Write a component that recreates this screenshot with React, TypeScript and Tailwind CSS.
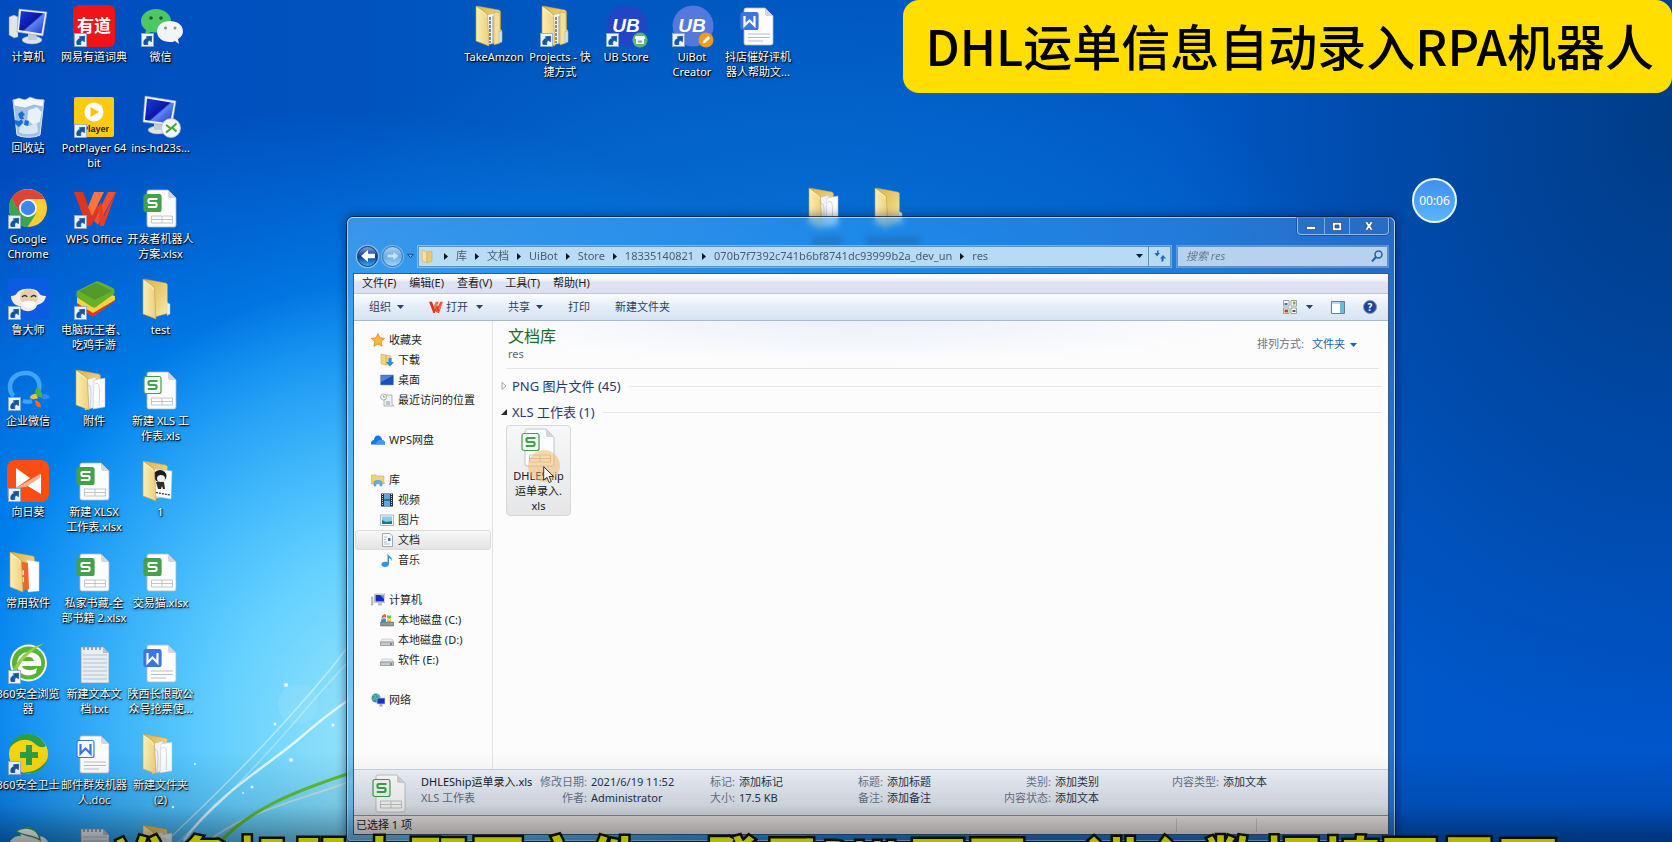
import React from "react";

type Kids = { children?: React.ReactNode };

/* ---------- desktop icons (40 x 42 artboard) ---------- */

function Art({ children, shortcut }: Kids & { shortcut?: boolean }) {
  return (
    <svg viewBox="0 0 40 42" className="h-[42px] w-10 shrink-0 overflow-visible" aria-hidden="true">
      {children}
      {shortcut && (
        <g>
          <rect x="0.5" y="28.5" width="12" height="13" fill="#e9f3fb" stroke="#8fa9c4" strokeWidth="0.8" />
          <path d="M3 39.500c-.8-3.400.6-5.800 3.600-6l-1.300-1.700 5.400-.5-.4 5.500-1.500-1.500c-2 .5-2.600 2-1.900 4.200z" fill="#17539f" stroke="#17539f" strokeWidth="0.8" />
        </g>
      )}
    </svg>
  );
}

function DocIcon({ letter, outlined }: { letter: "S" | "W"; outlined?: boolean }) {
  const tone = letter === "S" ? "#43a04b" : "#3d74e0";
  return (
    <Art>
      <path d="M8 3h19l8 8v27a2 2 0 0 1-2 2H8a2 2 0 0 1-2-2V5a2 2 0 0 1 2-2z" fill="#fdfdfd" stroke="#b0b7bf" strokeWidth="0.8" />
      <path d="M27 3v6a2 2 0 0 0 2 2h6z" fill="#d0d6dc" />
      {letter === "S" ? (
        <path d="M10.500 29h21v7h-21zM10.500 32.500h21M21 29v7" fill="none" stroke="#b4b8bd" strokeWidth="0.8" />
      ) : (
        <path d="M10 29h22M10 32.500h22M10 36h15" fill="none" stroke="#b4b8bd" strokeWidth="0.9" />
      )}
      <rect x="3" y="7.500" width="17" height="17" rx="2" fill={outlined ? "#f4fbf6" : tone} stroke={tone} strokeWidth="1.200" />
      {letter === "S" ? (
        <path d="M16.500 12H8.800a1.300 1.300 0 0 0-1.300 1.300v1.400A1.300 1.300 0 0 0 8.800 16h5.400a1.300 1.300 0 0 1 1.300 1.300v1.400a1.300 1.300 0 0 1-1.300 1.300H6.800" fill="none" stroke={outlined ? tone : "#fff"} strokeWidth="2.200" />
      ) : (
        <path d="M6.500 11v9.500l5-5 5 5V11" fill="none" stroke={outlined ? tone : "#fff"} strokeWidth="2.200" />
      )}
    </Art>
  );
}

function FolderIcon({ fill = "empty", shortcut }: { fill?: "empty" | "papers" | "docs" | "orange" | "photo"; shortcut?: boolean }) {
  return (
    <Art shortcut={shortcut}>
      <defs>
        <linearGradient id="folder-back" x1="0" y1="0" x2="1" y2="1">
          <stop offset="0" stopColor="#d9b450" />
          <stop offset="0.55" stopColor="#edcf78" />
          <stop offset="1" stopColor="#fbeeb8" />
        </linearGradient>
        <linearGradient id="folder-front" x1="0" y1="0" x2="1" y2="0">
          <stop offset="0" stopColor="#fbeeb6" />
          <stop offset="1" stopColor="#edd07c" />
        </linearGradient>
      </defs>
      <path d="M3 1l22 4 1.500 1.500V24l1.500 2v9L14 39z" fill="url(#folder-back)" stroke="#b8963c" strokeWidth="0.5" />
      {fill === "empty" && <path d="M26 25l3 1v10l-3 1.500z" fill="#e6eef2" stroke="#b4bfc4" strokeWidth="0.4" />}
      {fill === "papers" && (
        <g stroke="#b9bec6" strokeWidth="0.5">
          <path d="M11 11l11-3v30l-11 3z" fill="#f1f3f6" />
          <path d="M20 11l11-2v29l-12 2z" fill="#fcfdfe" />
          <path d="M13 17c4-3 5 4 3 22M21 15c5-3 5 5 4 22" fill="none" stroke="#a9b0ba" />
        </g>
      )}
      {fill === "docs" && (
        <g strokeWidth="0.5">
          <path d="M12 10l9-2v30l-9 2z" fill="#f3f3ee" stroke="#a9a58f" />
          <path d="M16 12v26" stroke="#5f6a6a" strokeWidth="1.500" strokeDasharray="3 1" />
          <path d="M19 11v27" stroke="#8d9694" strokeWidth="1" />
          <path d="M20 7l6 1v30l-6 2z" fill="#f6df95" stroke="#b99a48" />
          <path d="M25 26l3 1v10l-3 1z" fill="#cfe3ef" stroke="#8fb0c4" />
        </g>
      )}
      {fill === "orange" && (
        <g>
          <path d="M19 9l12 2v29l-11 1z" fill="#fff" stroke="#c8ccd2" strokeWidth="0.5" />
          <path d="M11 10l9 2 1 26-10 3z" fill="#f0652a" />
          <path d="M12 20l4-1v5l-4 1zM12 27l4-1v5l-4 1z" fill="#ffd9c2" />
        </g>
      )}
      {fill === "photo" && (
        <g>
          <path d="M12 9l19 2-1 28-18-3z" fill="#fafafa" stroke="#c5c8cc" strokeWidth="0.5" />
          <ellipse cx="19" cy="16" rx="6.500" ry="6" fill="#1d1d1f" />
          <ellipse cx="20" cy="18.500" rx="4" ry="3.500" fill="#f5efe9" />
          <path d="M15 22h8l1 7h-2l-1-3-1 3h-3z" fill="#2d2d30" />
          <path d="M12 32l17 3" stroke="#333" strokeWidth="1.200" strokeDasharray="2 1" />
        </g>
      )}
      <path d="M2 1l10 7c1 .8 1.500 2 1.500 3.500L15 41 2 36z" fill="url(#folder-front)" stroke="#c09f48" strokeWidth="0.6" />
      <path d="M3 3l8 6c1 .7 1 2 1 3" fill="none" stroke="#fff6cf" strokeWidth="0.8" />
    </Art>
  );
}

function PcIcon({ remote }: { remote?: boolean }) {
  return (
    <Art>
      <defs>
        <linearGradient id="pc-screen" x1="0" y1="0" x2="1" y2="1">
          <stop offset="0" stopColor="#1d3fd0" />
          <stop offset="0.5" stopColor="#0a16a8" />
          <stop offset="0.55" stopColor="#5b86f0" />
          <stop offset="1" stopColor="#1b35c4" />
        </linearGradient>
      </defs>
      {!remote && <path d="M1 12l5-2 4 2v20l-4 1-5-3z" fill="#dfe5ea" stroke="#7f8b96" strokeWidth="0.5" />}
      <g transform={remote ? "translate(-7 -1)" : undefined}>
        <ellipse cx="24" cy="35" rx="10" ry="4" fill="#dde4ea" stroke="#92a0ac" strokeWidth="0.5" />
        <path d="M20 27h8l1 8h-9z" fill="#c3ccd4" />
        <path d={remote ? "M11 1l31 5-4 25-29-4z" : "M11 4l28 3-4 24-26-4z"} fill="#eef2f5" stroke="#90a0b0" strokeWidth="0.6" />
        <path d={remote ? "M13 3.500l27 4.500-4 20.500L11 25z" : "M13 6l24 2.500-3.500 20L11 25z"} fill="url(#pc-screen)" />
      </g>
      {remote && (
        <g>
          <circle cx="30" cy="32" r="9.500" fill="#f4f6f6" stroke="#b7bfc4" strokeWidth="0.8" />
          <path d="M25 29l5 3.500-5 4M35.500 27.500l-4.500 4 4.500 4" fill="none" stroke="#44a43c" strokeWidth="2" />
        </g>
      )}
    </Art>
  );
}

const YoudaoIcon = () => (
  <Art shortcut>
    <rect x="-1" y="0" width="42" height="42" rx="6" fill="#f01418" />
    <text x="20" y="27" textAnchor="middle" fontSize="17" fontWeight="700" fill="#fff" fontFamily="'Noto Sans CJK SC', sans-serif">有道</text>
  </Art>
);

const WechatIcon = () => (
  <Art shortcut>
    <path d="M15 4C7 4 0 9 0 16c0 4 2 7 5 9l-1 5 6-3c9 2 20-2 20-11C30 9 23 4 15 4z" fill="#4cc764" />
    <circle cx="10" cy="13" r="1.800" fill="#1f5d2c" /><circle cx="20" cy="13" r="1.800" fill="#1f5d2c" />
    <path d="M29 16c-7 0-13 4-13 10.500S22 37 29 37c2 0 3 0 5-1l4 3-1-5c3-2 5-4 5-7.500C42 20 36 16 29 16z" fill="#f3f5f5" />
    <circle cx="24.500" cy="23" r="1.500" fill="#8a8f92" /><circle cx="34" cy="23" r="1.500" fill="#8a8f92" />
  </Art>
);

const BinIcon = () => (
  <Art>
    <path d="M5 4h31l-4 35c-6 3-17 3-23 0z" fill="#bcd6ea" fillOpacity="0.85" stroke="#dcebf6" strokeWidth="1" />
    <path d="M5 4l6-2 6 2 5-3 6 2 8 1-1 7-9-2-9 3-11-2z" fill="#f2f7fb" stroke="#8ea5b8" strokeWidth="0.6" />
    <path d="M20 14l9-3 5 5-2 10-7 3-6-5z" fill="#e9f1f7" stroke="#9fb6c8" strokeWidth="0.4" />
    <path d="M11 36l1-9 9 3 8-3 1 9c-6 3-14 3-19 0z" fill="#e6eff6" opacity="0.8" />
    <path d="M10 18l4-3 3 4-2 1 1 3h-4zM7 24l4 1 3-2 1 4-4 4-4-3zM17 24l4 1-1 5-4-1z" fill="#1c6fd0" />
  </Art>
);

const PotPlayerIcon = () => (
  <Art shortcut>
    <rect x="0" y="1" width="40" height="40" rx="2" fill="#fcca10" />
    <circle cx="20" cy="16" r="9.500" fill="#fff" />
    <path d="M16.500 11l8.500 5-8.500 5z" fill="#fcc010" />
    <text x="35" y="36" textAnchor="end" fontSize="9" fontWeight="700" fill="#2b2410" fontFamily="'Liberation Sans', sans-serif">Player</text>
  </Art>
);

const ChromeIcon = () => (
  <Art shortcut>
    <circle cx="20" cy="21" r="19" fill="#f8ce33" />
    <path d="M3.500 11.500A19 19 0 0 1 36.500 12H20L11.500 26z" fill="#dd4438" />
    <path d="M3.500 11.500A19 19 0 0 0 19.500 40l9-14-8.500 4-8-4z" fill="#3da251" />
    <circle cx="20" cy="21" r="9" fill="#f4f6f8" />
    <circle cx="20" cy="21" r="7.200" fill="#3f83ee" />
  </Art>
);

const WpsMark = () => (
  <g>
    <path d="M0 5h9l8 22 6-11 3 6-9 17h-4z" fill="#e0341d" />
    <path d="M42 5h-8L20 34l4 4z" fill="#f5502b" />
    <path d="M20 5h10l-12 24-4-9z" fill="#fb7340" />
    <path d="M24 20l3-5 3 14 12-24-12 34h-4z" fill="#ee3d1e" />
  </g>
);

const LuIcon = () => (
  <Art shortcut>
    <rect x="0" y="0" width="41" height="41" rx="3" fill="#0b5ce2" />
    <path d="M3 18c3 0 5-1 6-3 3-5 19-6 22 0 1 2 3 3 7 3-1 6-5 8-9 9-2 8-15 8-18 1-5-1-8-5-8-10z" fill="#f3ebe1" />
    <ellipse cx="21" cy="19" rx="9" ry="8" fill="#e3cfb4" />
    <path d="M14 19c2-2 4-2 5 0M23 19c2-2 4-2 5 0" stroke="#333" strokeWidth="1.500" fill="none" />
    <path d="M14 25c3-3 11-3 14 0-2 7-12 7-14 0z" fill="#fffaf3" />
  </Art>
);

const StacksIcon = () => (
  <Art shortcut>
    <path d="M3 23l20-7 18 7-22 16-16-10z" fill="#d8382c" />
    <path d="M3 19l20-7 18 6v4L19 35 3 25z" fill="#f6d53a" />
    <path d="M3 13L21 4c2-1 3-1 5 0l13 6c2 1 2 4 1 6L22 29c-1 1-3 1-4 0L4 20c-2-1-2-5-1-7z" fill="#67b02e" />
    <path d="M5 13l17-8 16 8-17 9z" fill="#529a2b" />
  </Art>
);

const WeComIcon = () => (
  <Art shortcut>
    <path d="M31 21c2-10-4-17-13-17C8 4 2 10 2 18c0 4 1 7 4 9" fill="none" stroke="#3fa6f5" strokeWidth="4.500" />
    <path d="M15 32c3 1 6 1 9 0" stroke="#3fa6f5" strokeWidth="4" fill="none" />
    <path d="M29 18c5 3 6 8 5 11-3-1-6-2-7-5 0-2 1-4 2-6z" fill="#4db04f" />
    <path d="M35 25c4 0 6 1 7 3-3 3-6 3-8 1z" fill="#2f8de8" />
    <path d="M27 31c4 1 6 4 6 7-3 1-6-1-6-7z" fill="#ee6a2c" />
    <path d="M28 25c-4 0-6 2-6 4 3 2 6 1 8 0z" fill="#f3c243" />
  </Art>
);

const SunloginIcon = () => (
  <Art shortcut>
    <rect x="-1" y="0" width="42" height="42" rx="8" fill="#fb4c12" />
    <path d="M8 8l14 10-14 10z M33 14v20L18 25z" fill="#fff" />
    <path d="M8 28l24-14v4L18 27z" fill="#ffb08d" />
  </Art>
);

const Browser360Icon = () => (
  <Art shortcut>
    <circle cx="20.500" cy="21" r="18.500" fill="#f3f9ee" />
    <circle cx="20.500" cy="21" r="16.500" fill="#58b234" />
    <path d="M33 24H14c1 4 9 6 15 2l-1 5c-9 6-20 0-19-10S19 8 26 11c6 2 8 7 7 13zM14 19h12c-1-5-10-6-12 0z" fill="#fff" />
    <path d="M4 31C10 14 24 4 37 1 24 8 12 18 7 33z" fill="#8fd14b" />
  </Art>
);

const Guard360Icon = () => (
  <Art shortcut>
    <circle cx="20.500" cy="21" r="19.500" fill="#f7d310" />
    <path d="M1 16C4 3 16-1 26 2c6 2 10 7 12 11-4 3-9 0-12-3-6-5-17-5-25 6z" fill="#2c9d45" />
    <path d="M40 25c-3 12-14 18-25 14 10 1 20-4 25-14z" fill="#2c9d45" />
    <path d="M18 12h6v7h6v6h-6v7h-6v-7h-6v-6h6z" fill="#2c9d45" />
  </Art>
);

const NotepadIcon = () => (
  <Art>
    <path d="M7 5h22l6 6v30H7z" fill="#e9eef4" stroke="#8d99a8" strokeWidth="0.7" />
    <path d="M9 13h24M9 17h24M9 21h24M9 25h24M9 29h24M9 33h24M9 37h24" stroke="#aebccc" strokeWidth="0.9" />
    <path d="M10 5v3M14 5v3M18 5v3M22 5v3M26 5v3" stroke="#7f8792" strokeWidth="1.400" />
    <path d="M29 5v6h6z" fill="#b6bfca" />
  </Art>
);

const FlowerIcon = () => (
  <Art shortcut>
    <circle cx="20" cy="11" r="8" fill="#f7faf8" stroke="#2f9a6b" strokeWidth="1" />
    <circle cx="11" cy="22" r="10" fill="#f7faf8" />
    <circle cx="31" cy="22" r="10" fill="#f7faf8" />
    <path d="M8 7c9-6 23-3 24 9-6-5-15-3-24-9z" fill="#fff" stroke="#2f9a6b" strokeWidth="1.500" />
  </Art>
);

function UbIcon({ creator }: { creator?: boolean }) {
  return (
    <Art shortcut>
      <circle cx="21" cy="21" r="20.500" fill={creator ? "#5479dc" : "#2046c6"} />
      <text x="20" y="27" textAnchor="middle" fontSize="19" fontWeight="700" fontStyle="italic" fill="#fff" fontFamily="'Liberation Sans', sans-serif">UB</text>
      <circle cx="34" cy="35" r="7.500" fill={creator ? "#f49a1c" : "#5cb777"} />
      {creator ? (
        <path d="M30.500 38.500l.6-2.500 5-5 2 2-5 5z" fill="#fff" />
      ) : (
        <path d="M29.500 31h9l.8 3h-1.300v5h-8v-5h-1.300zM32 35.500v2h4v-2z" fill="#fff" fillRule="evenodd" />
      )}
    </Art>
  );
}

/* ---------- desktop shortcuts ---------- */

type Shortcut = { icon: React.ReactNode; lines: string[] };

const desktop: Shortcut[] = [
  { icon: <PcIcon />, lines: ["计算机"] },
  { icon: <BinIcon />, lines: ["回收站"] },
  { icon: <ChromeIcon />, lines: ["Google", "Chrome"] },
  { icon: <LuIcon />, lines: ["鲁大师"] },
  { icon: <WeComIcon />, lines: ["企业微信"] },
  { icon: <SunloginIcon />, lines: ["向日葵"] },
  { icon: <FolderIcon fill="orange" />, lines: ["常用软件"] },
  { icon: <Browser360Icon />, lines: ["360安全浏览", "器"] },
  { icon: <Guard360Icon />, lines: ["360安全卫士"] },
  { icon: <FlowerIcon />, lines: [] },
  { icon: <YoudaoIcon />, lines: ["网易有道词典"] },
  { icon: <PotPlayerIcon />, lines: ["PotPlayer 64", "bit"] },
  { icon: <Art shortcut><WpsMark /></Art>, lines: ["WPS Office"] },
  { icon: <StacksIcon />, lines: ["电脑玩王者、", "吃鸡手游"] },
  { icon: <FolderIcon fill="papers" />, lines: ["附件"] },
  { icon: <DocIcon letter="S" />, lines: ["新建 XLSX", "工作表.xlsx"] },
  { icon: <DocIcon letter="S" />, lines: ["私家书藏-全", "部书籍 2.xlsx"] },
  { icon: <NotepadIcon />, lines: ["新建文本文", "档.txt"] },
  { icon: <DocIcon letter="W" outlined />, lines: ["邮件群发机器", "人.doc"] },
  { icon: <NotepadIcon />, lines: [] },
  { icon: <WechatIcon />, lines: ["微信"] },
  { icon: <PcIcon remote />, lines: ["ins-hd23s..."] },
  { icon: <DocIcon letter="S" />, lines: ["开发者机器人", "方案.xlsx"] },
  { icon: <FolderIcon />, lines: ["test"] },
  { icon: <DocIcon letter="S" outlined />, lines: ["新建 XLS 工", "作表.xls"] },
  { icon: <FolderIcon fill="photo" />, lines: ["1"] },
  { icon: <DocIcon letter="S" />, lines: ["交易猫.xlsx"] },
  { icon: <DocIcon letter="W" />, lines: ["陕西长恨歌公", "众号抢票使..."] },
  { icon: <FolderIcon fill="papers" />, lines: ["新建文件夹", "(2)"] },
  { icon: <FolderIcon fill="papers" />, lines: [] },
];

const topRow: Shortcut[] = [
  { icon: <FolderIcon fill="docs" />, lines: ["TakeAmzon"] },
  { icon: <FolderIcon fill="docs" shortcut />, lines: ["Projects - 快", "捷方式"] },
  { icon: <UbIcon />, lines: ["UB Store"] },
  { icon: <UbIcon creator />, lines: ["UiBot", "Creator"] },
  { icon: <DocIcon letter="W" />, lines: ["抖店催好评机", "器人帮助文..."] },
];

function DesktopItem({ icon, lines }: Shortcut) {
  return (
    <button type="button" className="flex h-[91px] flex-col items-center gap-[2px] pt-[5px] text-[11px] leading-[15px] text-white">
      {icon}
      <span className="flex flex-col items-center whitespace-nowrap [text-shadow:1px_1px_1px_#000,0_1px_3px_rgba(0,0,0,0.9)]">
        {lines.map((l) => (
          <span key={l}>{l}</span>
        ))}
      </span>
    </button>
  );
}

function Wallpaper() {
  return (
    <div className="absolute inset-0 bg-[radial-gradient(ellipse_26%_55%_at_24%_88%,#a4e8f8_0%,rgba(112,216,255,0.9)_40%,rgba(30,170,255,0)_100%),radial-gradient(ellipse_40%_62%_at_20%_75%,#0ca0ff_0%,rgba(0,142,250,0.8)_50%,rgba(0,110,225,0)_100%),radial-gradient(ellipse_36%_50%_at_48%_50%,rgba(16,140,232,0.9)_0%,rgba(8,120,220,0.6)_50%,rgba(0,96,210,0)_100%),radial-gradient(ellipse_30%_75%_at_100%_15%,#003c86_0%,rgba(0,66,150,0.7)_50%,rgba(0,80,190,0)_100%),linear-gradient(90deg,#004cbe_0%,#0058c0_35%,#0058c6_75%,#0056cc_100%)]">
      <svg viewBox="0 0 1672 842" preserveAspectRatio="xMinYMax slice" className="h-full w-full" aria-hidden="true">
        <g fill="none" strokeLinecap="round">
          <path d="M172 836Q240 772 290 716T352 640" stroke="#e4faff" strokeOpacity="0.55" strokeWidth="1.500" />
          <path d="M178 842Q240 786 300 716T356 658" stroke="#e4faff" strokeOpacity="0.4" strokeWidth="1.500" />
          <path d="M184 840C220 792 270 764 300 738S340 706 360 692" stroke="#f4fdff" strokeOpacity="0.85" strokeWidth="2.500" />
          <path d="M200 848C240 812 290 804 360 778" stroke="#e6e6d8" strokeOpacity="0.6" strokeWidth="2" />
          <path d="M220 842C250 810 290 792 360 770" stroke="#5fc035" strokeWidth="3" />
        </g>
        <g fill="#fff">
          <circle cx="286" cy="685" r="2" /><circle cx="291" cy="760" r="2" /><circle cx="275" cy="724" r="1.500" />
          <circle cx="333" cy="725" r="1.500" /><circle cx="252" cy="787" r="1.500" /><circle cx="173" cy="807" r="1.200" />
          <circle cx="195" cy="764" r="1" /><circle cx="243" cy="793" r="1" />
        </g>
        <circle cx="298" cy="704" r="20" fill="#fff" opacity="0.08" />
      </svg>
    </div>
  );
}

/* ---------- explorer window ---------- */

const Caret = ({ className = "" }: { className?: string }) => (
  <svg viewBox="0 0 7 4" className={`h-1 w-[7px] shrink-0 ${className}`} aria-hidden="true">
    <path d="M0 0h7L3.500 4z" fill="currentColor" />
  </svg>
);

const Glyph = ({ children }: Kids) => (
  <svg viewBox="0 0 14 14" className="h-[14px] w-[14px] shrink-0" aria-hidden="true">{children}</svg>
);

const glyphs = {
  star: <Glyph><path d="M7 .5l2 4.300 4.700.6-3.500 3.200.9 4.700L7 11l-4.100 2.300.9-4.700L.3 5.400 5 4.800z" fill="#fbb63a" stroke="#d9801c" strokeWidth="0.7" /></Glyph>,
  download: <Glyph><path d="M1 1l5 1v10l-5-1zM6 2l5 1v9H6z" fill="#f3d77c" stroke="#c9a44a" strokeWidth="0.5" /><path d="M8.500 5h3v4H14l-4 4.500L6 9h2.500z" fill="#2a8fdb" /></Glyph>,
  desktop: <Glyph><path d="M.5 2h13v10H.5z" fill="#1c50b8" stroke="#7c9cc8" strokeWidth="0.6" /><path d="M1 2.500h12L1 9z" fill="#4d83dc" /></Glyph>,
  recent: <Glyph><path d="M4 2h8v9l2 2H4z" fill="#eef0f2" stroke="#949ba3" strokeWidth="0.7" /><circle cx="3.500" cy="4" r="3" fill="#f6f7f8" stroke="#8b949e" strokeWidth="0.7" /><path d="M3.500 2.500V4H5M6 9h4M6 11h4" stroke="#6d7680" strokeWidth="0.7" fill="none" /></Glyph>,
  cloud: <Glyph><path d="M0 11.500C-.5 8 2 7 3 7c0-3 2-5 4.500-4.500S11 5 11 7c2 0 3.500 2 3 4.500z" fill="#1d74e6" /><path d="M5 11.500c0-3 3-5 5-4.500 3 0 4 2 4 4.500z" fill="#3f9bf7" /></Glyph>,
  library: <Glyph><path d="M.5 2H5l1 1h7v8H.500z" fill="#f0d27a" stroke="#c4a24c" strokeWidth="0.5" /><path d="M3 13V9c0-2 8-2 8 0v4H9v-2c0-1-4-1-4 0v2z" fill="#5fb5e4" stroke="#2b80b8" strokeWidth="0.4" /></Glyph>,
  video: <Glyph><path d="M1 .5h12v13H1z" fill="#23323e" /><path d="M4 1h6v5.500H4zM4 7.500h6V13H4z" fill="#5ca6dc" /><path d="M2.500 1v12M11.500 1v12" stroke="#d4dde4" strokeWidth="1" strokeDasharray="1 1" /></Glyph>,
  picture: <Glyph><path d="M.5 2h13v10.500H.500z" fill="#f6f8f9" stroke="#8b98a4" strokeWidth="0.7" /><path d="M2 3.500h10V11H2z" fill="#7ed0ea" /><path d="M2 11V7l4 2 6-1v3z" fill="#1d7b74" /></Glyph>,
  document: <Glyph><path d="M2.500.5H10L12.500 3v10.500h-10z" fill="#f8f9fb" stroke="#7e8894" strokeWidth="0.7" /><path d="M4 4h3M4 6.500h2M4 9h3M4 11h6" stroke="#9aa4b0" strokeWidth="0.7" /><path d="M8 5h2.500v3H8z" fill="#3a76c4" /></Glyph>,
  music: <Glyph><path d="M7.500 0c.5 3 5 3.500 4.500 8-1-2-2-2.500-3-3v6c0 2-1.500 3-4 3s-4-1.500-3.500-3.200S5 8.500 7.500 9z" fill="#2f96dc" /></Glyph>,
  computer: <Glyph><path d="M0 4h2v8H0z" fill="#c6ccd2" stroke="#7d8690" strokeWidth="0.4" /><path d="M3.500 1H14v8.500H3.500z" fill="#e3e7ec" stroke="#8d97a2" strokeWidth="0.5" /><path d="M4.500 2H13v6.500H4.500z" fill="#1a2cc0" /><path d="M9 2h4v4z" fill="#6f93f0" /><path d="M7.500 9.500h3l1 3h-5z" fill="#b9c1ca" /></Glyph>,
  winDisk: <Glyph><path d="M2 3c2-2 3-2 4-1v3C5 4 4 4 1.500 5.500z" fill="#e8582a" /><path d="M7 2c2 1 3 1 4 0v3c-1 1-3 1-4 0z" fill="#7bbf3a" /><path d="M1.500 6C3 5 5 5 6 6v3H1z" fill="#3d8fdc" /><path d="M7 6c2 1 3 1 4 0v3H7z" fill="#f4c534" /><path d="M.5 9h13v4H.5z" fill="#8b949b" stroke="#555e66" strokeWidth="0.5" /><path d="M10 11h2" stroke="#66e05c" /></Glyph>,
  disk: <Glyph><path d="M2 6h10l1.500 3H.500z" fill="#eceeef" stroke="#9da3a8" strokeWidth="0.4" /><path d="M.500 9h13v3.500H.500z" fill="#c4c9cd" stroke="#70777d" strokeWidth="0.6" /><path d="M10 11h2" stroke="#3f4a40" /></Glyph>,
  network: <Glyph><circle cx="5" cy="5" r="4.500" fill="#2d92c8" /><path d="M2 2c2 0 3 2 2 3S2 7 1.500 8M6 1c0 2 2 2 3 3" stroke="#5fc05a" strokeWidth="1.500" fill="none" /><path d="M6 5h8v6H6z" fill="#1b33c4" stroke="#c5cdd8" strokeWidth="0.7" /><path d="M9 11h2l1 2.500H8z" fill="#a6aeb8" /></Glyph>,
  folder: <Glyph><path d="M1 1l5 2v11l-5-2z" fill="#f6e09a" stroke="#c5a24a" strokeWidth="0.5" /><path d="M6 3l5-1v10l-5 2z" fill="#ecca6c" stroke="#c5a24a" strokeWidth="0.5" /></Glyph>,
};

type NavGroup = { icon: React.ReactNode; label: string; items: { icon: React.ReactNode; label: string; active?: boolean }[] };

const navGroups: NavGroup[] = [
  { icon: glyphs.star, label: "收藏夹", items: [{ icon: glyphs.download, label: "下载" }, { icon: glyphs.desktop, label: "桌面" }, { icon: glyphs.recent, label: "最近访问的位置" }] },
  { icon: glyphs.cloud, label: "WPS网盘", items: [] },
  { icon: glyphs.library, label: "库", items: [{ icon: glyphs.video, label: "视频" }, { icon: glyphs.picture, label: "图片" }, { icon: glyphs.document, label: "文档", active: true }, { icon: glyphs.music, label: "音乐" }] },
  { icon: glyphs.computer, label: "计算机", items: [{ icon: glyphs.winDisk, label: "本地磁盘 (C:)" }, { icon: glyphs.disk, label: "本地磁盘 (D:)" }, { icon: glyphs.disk, label: "软件 (E:)" }] },
  { icon: glyphs.network, label: "网络", items: [] },
];

function Sidebar() {
  return (
    <nav className="flex w-[139px] shrink-0 flex-col gap-5 border-r border-[#dfe3ea] pt-[9px] text-[11px] leading-5 text-[#1c1c1c]">
      {navGroups.map((g) => (
        <div key={g.label} className="flex flex-col px-px">
          <button type="button" className="flex h-5 items-center gap-1 pl-4">{g.icon}{g.label}</button>
          {g.items.map((i) => (
            <button
              key={i.label}
              type="button"
              className={`flex h-5 items-center gap-1 whitespace-nowrap pl-[25px] ${i.active ? "rounded-sm bg-linear-to-b from-[#f8f8f8] to-[#e3e3e3] shadow-[inset_0_0_0_1px_#dcdcdc]" : ""}`}
            >
              {i.icon}{i.label}
            </button>
          ))}
        </div>
      ))}
    </nav>
  );
}

const crumbs = ["库", "文档", "UiBot", "Store", "18335140821", "070b7f7392c741b6bf8741dc93999b2a_dev_un", "res"];

function AddressRow() {
  return (
    <div className="flex h-5 items-center pl-1 pr-px">
      <button type="button" aria-label="后退" className="flex h-[21px] w-[21px] shrink-0 items-center justify-center rounded-full border border-[#16386e] bg-linear-to-b from-[#7f9fd8] via-[#123a94] to-[#38b0f0] shadow-[0_0_1px_1px_rgba(255,255,255,0.5)]">
        <svg viewBox="0 0 14 12" className="h-3 w-[14px]" aria-hidden="true"><path d="M7 0v3.800h7v4.400H7V12L0 6z" fill="#fff" /></svg>
      </button>
      <button type="button" aria-label="前进" className="ml-1 flex h-[21px] w-[21px] shrink-0 items-center justify-center rounded-full border border-[#3f74ac] bg-linear-to-b from-[#a5d0f4] via-[#6aaee4] to-[#9cd6fa] shadow-[0_0_1px_1px_rgba(255,255,255,0.35)]">
        <svg viewBox="0 0 14 12" className="h-[10px] w-3" aria-hidden="true"><path d="M7 0v3.800H0v4.400h7V12l7-6z" fill="#c6e2f7" stroke="#6aa3d4" strokeWidth="0.6" /></svg>
      </button>
      <svg viewBox="0 0 8 6" className="mx-1 h-[6px] w-[7px]" aria-hidden="true"><path d="M.7 1h6.600L4 5z" fill="#6db2ee" stroke="#173f78" /></svg>
      <div className="flex h-[21px] min-w-0 flex-1 items-center border border-[#5f93bf] bg-[#c8e4f8]/90 text-[11px] leading-[18px] text-[#4a5c6c] shadow-[0_0_0_1px_rgba(255,255,255,0.35)]">
        <span className="ml-[2px] mr-px flex">{glyphs.folder}</span>
        {crumbs.map((c) => (
          <span key={c} className="flex items-center">
            <svg viewBox="0 0 4 7" className="mx-2 h-[7px] w-1" aria-hidden="true"><path d="M0 0v7l4-3.500z" fill="#0c1620" /></svg>
            <button type="button">{c}</button>
          </span>
        ))}
        <Caret className="ml-auto mr-[5px] text-[#0c1f3a]" />
        <button type="button" aria-label="刷新" className="flex h-full w-[22px] items-center justify-center border-l border-[#5f93bf]">
          <svg viewBox="0 0 12 12" className="h-3 w-3" aria-hidden="true">
            <path d="M4.500 0L3 1v2H.5L3 6.500 6 3H4.500z" fill="#2467b5" />
            <path d="M7.500 12L9.500 11V8.500H12L9 5 6 8.500h1.500z" fill="#2467b5" />
          </svg>
        </button>
      </div>
      <div className="ml-[6px] flex h-[21px] w-[211px] items-center border border-[#5f93bf] bg-[#c8dcf4]/90 pl-2 pr-1 shadow-[0_0_0_1px_rgba(255,255,255,0.25)]">
        <input aria-label="搜索 res" placeholder="搜索 res" className="min-w-0 flex-1 bg-transparent text-[11px] italic leading-[18px] outline-none placeholder:text-[#66788c]" />
        <svg viewBox="0 0 12 12" className="h-3 w-3" aria-hidden="true"><circle cx="7.500" cy="4.500" r="3.500" fill="none" stroke="#2a5f9e" strokeWidth="1.500" /><path d="M5 7L1 11.500" stroke="#2a5f9e" strokeWidth="2" /></svg>
      </div>
    </div>
  );
}

function Toolbar() {
  return (
    <div className="flex h-[27px] items-center border-b border-[#a9b8cc] bg-linear-to-b from-[#fafcff] from-0% via-[#e4edf8] via-50% to-[#d8e4f3] pl-[15px] pr-[11px] text-[11px] text-[#2a3f63]">
      <button type="button" className="flex items-center gap-[6px]">组织<Caret /></button>
      <button type="button" className="ml-[25px] flex items-center">
        <svg viewBox="0 0 42 42" className="h-[14px] w-[14px]" aria-hidden="true"><WpsMark /></svg>
        <span className="ml-[3px]">打开</span>
        <Caret className="ml-2" />
      </button>
      <button type="button" className="ml-[25px] flex items-center gap-[6px]">共享<Caret /></button>
      <button type="button" className="ml-[25px]">打印</button>
      <button type="button" className="ml-[25px]">新建文件夹</button>
      <button type="button" aria-label="更改您的视图" className="ml-auto flex items-center gap-[9px]">
        <svg viewBox="0 0 14 14" className="h-[14px] w-[14px]" aria-hidden="true">
          <path d="M.5.500h5.500V6H.500zM8 .5h5.500V6H8zM.5 8h5.500v5.500H.500zM8 8h5.500v5.500H8z" fill="#fff" stroke="#8a8f86" strokeWidth="0.8" />
          <path d="M1.500 3h3v2h-3z" fill="#3a6fb4" /><path d="M10 1.500h2.500v3H10z" fill="#8fa52c" /><path d="M1.500 9.500h3.500v3H1.500z" fill="#b8481e" /><path d="M9.500 10h3v2h-3z" fill="#4a5868" />
        </svg>
        <Caret />
      </button>
      <button type="button" aria-label="显示预览窗格" className="ml-[18px]">
        <svg viewBox="0 0 14 13" className="h-[13px] w-[14px]" aria-hidden="true"><path d="M.5.500h13v12H.500z" fill="#fff" stroke="#5f7f98" /><path d="M9 1h4v11H9z" fill="#69bcd8" /><path d="M1 1h8v2H1z" fill="#c7d6e2" /></svg>
      </button>
      <button type="button" aria-label="获取帮助" className="ml-[18px] flex h-[14px] w-[14px] items-center justify-center rounded-full border border-[#8595b5] bg-[#1f429c] text-[10px] font-bold leading-none text-white">?</button>
    </div>
  );
}

function GroupHeader({ label, open }: { label: string; open?: boolean }) {
  return (
    <button type="button" className="flex h-[26px] items-center pl-2 pr-[6px] text-[13px] leading-5 text-[#26396e]">
      <svg viewBox="0 0 6 8" className="mr-[5px] h-2 w-[6px]" aria-hidden="true">
        {open ? <path d="M6 1v6H0z" fill="#2b2b2b" /> : <path d="M1 .5v7L5 4z" fill="#fff" stroke="#8a8f96" strokeWidth="0.8" />}
      </svg>
      {label}
      <span className="ml-2 h-px flex-1 bg-[#e5e8ec]" />
    </button>
  );
}

function FilePane() {
  return (
    <main className="flex min-w-0 flex-1 flex-col">
      <header className="ml-[13px] mr-[9px] flex h-12 items-center justify-between border-b border-[#e1e5ea] bg-[radial-gradient(ellipse_45%_90%_at_40%_0%,#eaf1fb,transparent)] pl-[2px]">
        <div className="pb-[2px]">
          <h1 className="text-[16px] leading-[21px] text-[#1d6b2a]">文档库</h1>
          <p className="text-[11px] leading-[14px] text-[#5c6670]">res</p>
        </div>
        <label className="flex items-center pr-[22px] text-[11px] text-[#6b7480]">
          排列方式:
          <select defaultValue="folder" className="ml-2 w-9 appearance-none bg-transparent text-[#1c62ad] outline-none">
            <option value="folder">文件夹</option>
          </select>
          <Caret className="ml-[2px] text-[#1c62ad]" />
        </label>
      </header>
      <div className="flex flex-col pt-1">
        <GroupHeader label="PNG 图片文件 (45)" />
        <GroupHeader label="XLS 工作表 (1)" open />
      </div>
      <div className="flex px-[13px]">
        <button type="button" className="relative flex w-[65px] flex-col items-center rounded-sm border border-[#d6d8da] bg-linear-to-b from-[#f6f7f8] to-[#e4e6e8] pb-[2px] text-[11px] leading-[15px] text-[#161616]">
          <DocIcon letter="S" outlined />
          <span>DHLEShip</span>
          <span>运单录入.</span>
          <span>xls</span>
          <span className="absolute left-[21px] top-6 h-8 w-8 rounded-full bg-[#f5b35a]/50" />
          <svg viewBox="0 0 12 18" className="absolute left-9 top-10 h-[18px] w-3" aria-hidden="true"><path d="M.700.700v13.500l3.200-3 2.200 5.300 2.200-1-2.200-5h4.500z" fill="#fff" stroke="#222" strokeWidth="0.9" /></svg>
        </button>
      </div>
    </main>
  );
}

const details: { width: string; rows: [string, string][] }[] = [
  { width: "w-[148px]", rows: [["修改日期:", "2021/6/19 11:52"], ["作者:", "Administrator"]] },
  { width: "w-[148px]", rows: [["标记:", "添加标记"], ["大小:", "17.5 KB"]] },
  { width: "w-[168px]", rows: [["标题:", "添加标题"], ["备注:", "添加备注"]] },
  { width: "w-[168px]", rows: [["类别:", "添加类别"], ["内容状态:", "添加文本"]] },
  { width: "w-[168px]", rows: [["内容类型:", "添加文本"]] },
];

function DetailsPane() {
  return (
    <section className="flex h-[46px] shrink-0 items-center border-t border-[#c9d3e0] bg-linear-to-b from-[#eef3fb] to-[#dde5ee] pl-4 text-[11px] leading-4">
      <DocIcon letter="S" outlined />
      <div className="ml-[11px] w-[116px] shrink-0 self-start whitespace-nowrap pt-1">
        <p className="text-[#16202c]">DHLEShip运单录入.xls</p>
        <p className="text-[#5d6d80]">XLS 工作表</p>
      </div>
      {details.map((col) => (
        <dl key={col.rows[0][0]} className={`grid shrink-0 grid-cols-[50px_1fr] gap-x-1 self-start whitespace-nowrap pt-1 ${col.width}`}>
          {col.rows.map(([k, v]) => (
            <React.Fragment key={k}>
              <dt className="text-right text-[#66768a]">{k}</dt>
              <dd className="text-[#22364f]">{v}</dd>
            </React.Fragment>
          ))}
        </dl>
      ))}
    </section>
  );
}

function ExplorerWindow() {
  return (
    <section className="absolute bottom-px left-[347px] right-[277px] top-[217px] flex flex-col rounded-t-md rounded-b border border-white/60 bg-linear-to-r from-[#5cb2f4]/60 via-[#2a9bf8]/60 to-[#3f83d6]/60 px-[5px] pb-[5px] shadow-[0_0_0_1px_rgba(8,32,60,0.75),0_0_10px_2px_rgba(0,20,60,0.45)] backdrop-blur-[3px]">
      <div className="flex h-7 shrink-0 items-start justify-end">
        <div className="flex h-[17px] w-[92px] rounded-b border border-t-0 border-white/50 shadow-[0_0_0_1px_rgba(10,40,90,0.4)]">
          <button type="button" aria-label="最小化" className="flex w-[27px] items-center justify-center border-r border-white/40">
            <svg viewBox="0 0 10 10" className="h-[10px] w-[10px]" aria-hidden="true"><path d="M.5 5.500h9v3h-9z" fill="#fff" stroke="#34465c" strokeWidth="0.7" /></svg>
          </button>
          <button type="button" aria-label="最大化" className="flex w-[25px] items-center justify-center border-r border-white/40">
            <svg viewBox="0 0 10 10" className="h-[10px] w-[10px]" aria-hidden="true"><path d="M.500 1.500h9v8h-9zM3 4v3h4V4z" fill="#fff" fillRule="evenodd" stroke="#34465c" strokeWidth="0.7" /></svg>
          </button>
          <button type="button" aria-label="关闭" className="flex flex-1 items-center justify-center">
            <svg viewBox="0 0 10 10" className="h-[10px] w-[10px]" aria-hidden="true"><path d="M.8.800h2.900L5 3l1.300-2.200h2.900L6.700 5l2.500 4.200H6.300L5 7 3.700 9.200H.8L3.300 5z" fill="#fff" stroke="#34465c" strokeWidth="0.7" /></svg>
          </button>
        </div>
      </div>
      <AddressRow />
      <div className="mt-[7px] flex min-h-0 flex-1 flex-col border border-[#3d5a78] bg-[#fcfcfd]">
        <div className="flex h-5 shrink-0 items-center gap-[13px] border-b border-[#bcc6dc] bg-linear-to-b from-[#fdfdff] from-20% via-[#dfe3f2] via-45% to-[#dcdff0] pl-2 text-[11px] text-[#1a1a1a]">
          {["文件(F)", "编辑(E)", "查看(V)", "工具(T)", "帮助(H)"].map((m) => (
            <button key={m} type="button">{m}</button>
          ))}
        </div>
        <Toolbar />
        <div className="flex min-h-0 flex-1">
          <Sidebar />
          <FilePane />
        </div>
        <DetailsPane />
        <footer className="flex h-[19px] shrink-0 items-center border-t border-[#8e9196] bg-[#efeaea] pl-[2px] pr-1 text-[11px] leading-4 text-[#222]">
          <span className="flex-1">已选择 1 项</span>
          <span className="h-[14px] w-20 border-l border-[#cfcaca]" />
          <span className="h-[14px] w-32 border-l border-[#cfcaca]" />
        </footer>
      </div>
    </section>
  );
}

export default function App() {
  return (
    <div className="relative h-screen overflow-hidden bg-[#0058c8] font-['Noto_Sans','Noto_Sans_CJK_SC',sans-serif]">
      <Wallpaper />
      <div className="absolute -left-[5px] top-0 grid grid-flow-col grid-cols-[66px_66px_67px] grid-rows-[repeat(10,91px)]">
        {desktop.map((d, n) => (
          <DesktopItem key={n} {...d} />
        ))}
      </div>
      <div className="absolute left-[461px] top-0 grid grid-cols-[66px_66px_66px_66px_66px]">
        {topRow.map((d, n) => (
          <DesktopItem key={n} {...d} />
        ))}
      </div>
      <div className="absolute left-[794px] top-[182px] grid grid-cols-[66px_66px] justify-items-center">
        <DesktopItem icon={<FolderIcon fill="papers" />} lines={[]} />
        <DesktopItem icon={<FolderIcon />} lines={[]} />
        <span className="-mt-9 h-2 w-8 rounded bg-[#0a2a50]/70" />
        <span className="-mt-9 h-2 w-14 rounded bg-[#0a2a50]/70" />
      </div>

      <ExplorerWindow />

      <h2 className="absolute right-0 top-0 flex h-[93px] items-center rounded-2xl bg-[#ffde00] pb-1 pl-[22px] pr-[18px] font-['Noto_Sans_CJK_SC',sans-serif] text-[49px] font-medium leading-none whitespace-nowrap text-black">
        DHL运单信息自动录入RPA机器人
      </h2>
      <div className="absolute right-[215px] top-[178px] flex h-[45px] w-[45px] items-center justify-center rounded-full border-2 border-[#e8f6ff] bg-linear-to-b from-[#3f8ff0] to-[#5cb4fb] text-xs text-white">
        00:06
      </div>

      <div className="pointer-events-none absolute inset-x-0 bottom-0 h-[90px] bg-linear-to-b from-transparent via-black/10 via-60% to-black/40" />
      <p className="absolute inset-x-0 top-[829px] flex items-start justify-center whitespace-nowrap font-['Noto_Sans_CJK_SC',sans-serif] text-[59px] font-bold leading-[64px] text-[#b3b90c] [-webkit-text-stroke:5px_#0c0f02] [paint-order:stroke_fill]">
        准备机器人配置文件，登录<span className="text-[42px] leading-[50px]">DHL</span>网页，进入数据填写界面
      </p>
    </div>
  );
}
